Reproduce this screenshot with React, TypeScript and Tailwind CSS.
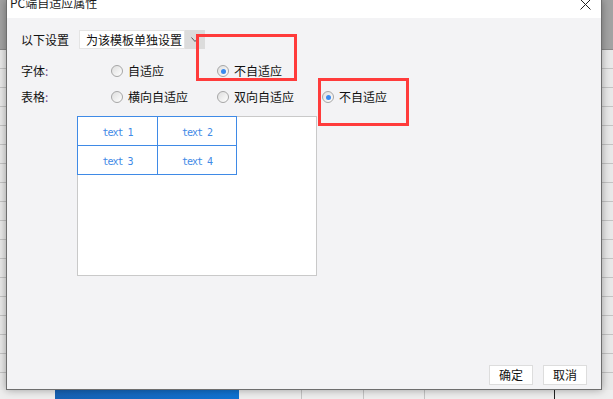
import React from "react";

const cjk = { fontFamily: '"Noto Sans CJK SC", "Noto Sans", sans-serif' };

function Radio({ checked }: { checked?: boolean }) {
  return (
    <span className="flex h-[12px] w-[12px] shrink-0 items-center justify-center rounded-full border border-[#a6a6a6] bg-gradient-to-br from-[#dedede] to-white">
      {checked && <span className="h-[5px] w-[5px] rounded-full bg-[#3a8bef]" />}
    </span>
  );
}

function Opt({ label, checked, w }: { label: string; checked?: boolean; w: string }) {
  return (
    <div className={`flex items-center gap-[5px] ${w}`}>
      <Radio checked={checked} />
      <span className="text-[12px] leading-[16px] text-[#111]">{label}</span>
    </div>
  );
}

export default function App() {
  return (
    <div className="relative h-[399px] w-[613px] overflow-hidden bg-[#ececec]" style={cjk}>
      {/* background application */}
      <div className="flex h-full flex-col">
        <div className="h-[50px] shrink-0 border-b border-[#8a8a8a] bg-[#a3a3a3]" />
        <div className="flex-1 bg-[repeating-linear-gradient(to_bottom,#e9e9e9_0px,#e9e9e9_18px,#c4c4c4_18px,#c4c4c4_19px)]" />
        <div className="flex h-[9px] shrink-0 bg-[#eeeeee]">
          <div className="ml-[55px] w-[184px] bg-gradient-to-r from-[#1762b4] to-[#1073d2]" />
          <div className="ml-[62px] w-px bg-[#c4c4c4]" />
          <div className="ml-[61px] w-px bg-[#c4c4c4]" />
          <div className="ml-[60px] w-px bg-[#c4c4c4]" />
          <div className="ml-[129px] w-px bg-[#222]" />
        </div>
      </div>

      {/* dialog */}
      <div className="absolute left-[6px] top-0 flex h-[390px] w-[596px] flex-col border-x border-b border-[#6e6e6e] bg-[#f3f3f5] shadow-[0_0_8px_rgba(0,0,0,0.35)]">
        <div className="flex h-[18px] shrink-0 items-start justify-between bg-white pl-[3px] pr-[10px]">
          <span className="-mt-[5px] text-[12px] leading-[16px] text-[#1a1a1a]">PC端自适应属性</span>
          <svg width="11" height="11" viewBox="0 0 11 11" className="-mt-px">
            <path d="M0.5 0.5 L10.5 10.5 M10.5 0.5 L0.5 10.5" stroke="#222" strokeWidth="1" fill="none" />
          </svg>
        </div>

        <div className="flex flex-1 flex-col pl-[14px] pr-[14px] pt-[12px]">
          <div className="flex h-[19px] items-center">
            <span className="w-[58px] text-[12px] leading-[16px] text-[#111]">以下设置</span>
            <div className="flex h-[19px]">
              <div className="flex w-[106px] items-center border border-[#e4e4e4] bg-white pl-[6px] text-[12px] leading-[16px] text-[#111]">
                为该模板单独设置
              </div>
              <div className="flex w-[20px] items-center justify-center bg-[#dcdcdc]">
                <svg width="8" height="5" viewBox="0 0 8 5">
                  <path d="M0.5 0.5 L4 4.5 L7.5 0.5" stroke="#555" strokeWidth="1" fill="none" />
                </svg>
              </div>
            </div>
          </div>

          <div className="mt-[12px] flex h-[20px] items-center">
            <span className="w-[90px] text-[12px] leading-[16px] text-[#111]">
              字体<span className="text-[#7b4a8e]">:</span>
            </span>
            <Opt label="自适应" w="w-[106px]" />
            <Opt label="不自适应" checked w="w-[106px]" />
          </div>

          <div className="mt-[6px] flex h-[20px] items-center">
            <span className="w-[90px] text-[12px] leading-[16px] text-[#111]">
              表格<span className="text-[#7b4a8e]">:</span>
            </span>
            <Opt label="横向自适应" w="w-[106px]" />
            <Opt label="双向自适应" w="w-[105px]" />
            <Opt label="不自适应" checked w="w-[80px]" />
          </div>

          <div className="ml-[56px] mt-[9px] h-[160px] w-[240px] border border-[#c9c9c9] bg-white">
            <div
              className="-ml-px -mt-px grid w-[160px] grid-cols-[80px_79px] border-l border-t border-[#3f8ae6] text-[10px] leading-[12px] tracking-[-1px] text-[#3f8ae6]"
              style={{ fontFamily: '"DejaVu Sans Mono", monospace' }}
            >
              {["text 1", "text 2", "text 3", "text 4"].map((t) => (
                <div key={t} className="flex h-[29px] items-center justify-center border-b border-r border-[#3f8ae6] pt-[3px]">
                  {t}
                </div>
              ))}
            </div>
          </div>

          <div className="flex-1" />
          <div className="mb-[4px] flex justify-end gap-[10px]">
            <button className="flex h-[20px] w-[44px] items-center justify-center border border-[#dddddd] bg-white text-[12px] leading-[16px] text-[#111]">
              确定
            </button>
            <button className="flex h-[20px] w-[44px] items-center justify-center border border-[#dddddd] bg-white text-[12px] leading-[16px] text-[#111]">
              取消
            </button>
          </div>
        </div>
      </div>

      {/* annotation boxes */}
      <div className="absolute left-[196px] top-[34px] h-[47px] w-[101px] border-[3px] border-[#ff3b3b]" />
      <div className="absolute left-[318px] top-[78px] h-[48px] w-[91px] border-[3px] border-[#ff3b3b]" />
    </div>
  );
}
